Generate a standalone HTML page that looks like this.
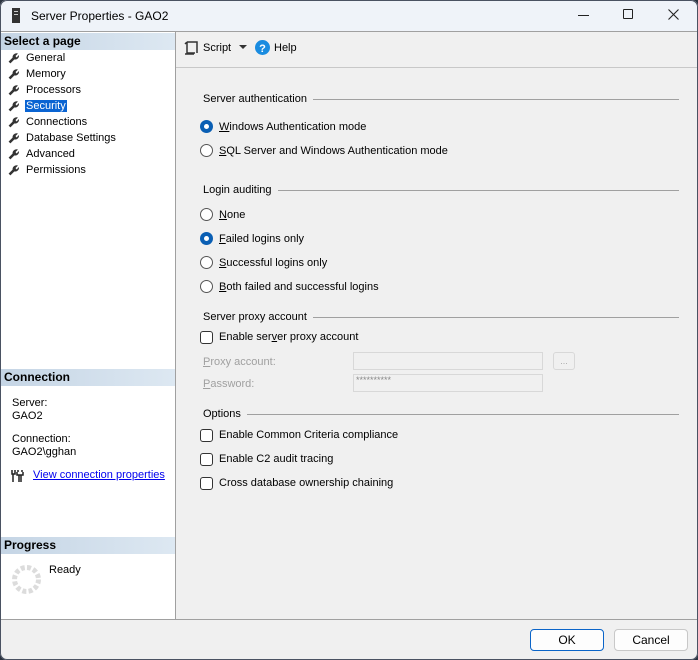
<!DOCTYPE html>
<html><head><style>
*{margin:0;padding:0;box-sizing:border-box}
body{width:698px;height:660px;overflow:hidden;background:#2b3340;font-family:"Liberation Sans",sans-serif;font-size:11px;color:#000}
.win{position:absolute;left:0;top:0;width:698px;height:660px;background:#f0f0f0;border-radius:7px;overflow:hidden}
.frame{position:absolute;left:0;top:0;width:698px;height:660px;border:1px solid #4a5262;border-radius:7px;pointer-events:none}
.title{position:absolute;left:0;top:0;width:698px;height:31px;background:#eff3f9}
.a{position:absolute;white-space:nowrap}
.left{position:absolute;left:1px;top:32px;width:175px;height:587px;background:#fff;border-right:1px solid #a0a0a0}
.hdr{position:absolute;left:0;width:174px;height:17px;background:linear-gradient(90deg,#c5d5e5,#dde8f2);font-weight:bold;font-size:12px;padding:1px 3px}
.item{position:absolute;left:7px;height:16px}
.item svg{position:absolute;left:0;top:2px}
.item span{position:absolute;left:17px;top:2px;white-space:nowrap;padding:0 1px}
.sec{position:absolute;left:203px;right:19px;height:14px}
.sec span{background:#f0f0f0;padding-right:6px;position:relative;top:1px}
.sec:before{content:"";position:absolute;left:0;right:0;top:7px;border-top:1px solid #a0a0a0}
.radio{position:absolute;left:200px;width:13px;height:13px;border-radius:50%;border:1px solid #555;background:#fff}
.radio.on{border:none;background:#0a5fb4}
.radio.on:after{content:"";position:absolute;left:4px;top:4px;width:5px;height:5px;border-radius:50%;background:#fff}
.cb{position:absolute;left:200px;width:13px;height:13px;border:1px solid #333;border-radius:3px;background:#fff}
.lbl{position:absolute;left:219px;white-space:nowrap;padding-top:1px}
u{text-decoration:underline}
.box{position:absolute;border:1px solid #d8d8d8;background:#f0f0f0}
.btn{position:absolute;top:629px;height:22px;border:1px solid #c8c8c8;border-radius:4px;background:#fdfdfd;text-align:center;line-height:20px;font-size:12px}
</style></head><body>
<div class="win">
<div class="title">
 <svg class="a" style="left:11px;top:8px" width="10" height="15"><rect x="1" y="0" width="8" height="15" fill="#333"/><rect x="3" y="3" width="4" height="1" fill="#ccc"/><rect x="3" y="6" width="4" height="1" fill="#ccc"/></svg>
 <div class="a" style="left:31px;top:9px;font-size:12px">Server Properties - GAO2</div>
 <div class="a" style="left:578px;top:15px;width:11px;border-top:1px solid #222"></div>
 <div class="a" style="left:623px;top:9px;width:10px;height:10px;border:1px solid #222;border-radius:1px"></div>
 <svg class="a" style="left:668px;top:9px" width="11" height="11"><path d="M0.5 0.5L10.5 10.5M10.5 0.5L0.5 10.5" stroke="#222" stroke-width="1.1"/></svg>
</div>
<div class="a" style="left:0;top:31px;width:698px;border-top:1px solid #a0a0a0"></div>
<div class="left">
 <div class="hdr" style="top:1px">Select a page</div>
 <div class="item" style="top:18px"><svg width="12" height="12"><path d="M1.5 10.5L6 6" stroke="#333" stroke-width="2.6"/><path d="M5 7A4 4 0 0 1 10 1.5L7.5 4L8.5 5.5L11 3A4 4 0 0 1 6.5 7.5Z" fill="#333"/></svg><span>General</span></div>
 <div class="item" style="top:34px"><svg width="12" height="12"><path d="M1.5 10.5L6 6" stroke="#333" stroke-width="2.6"/><path d="M5 7A4 4 0 0 1 10 1.5L7.5 4L8.5 5.5L11 3A4 4 0 0 1 6.5 7.5Z" fill="#333"/></svg><span>Memory</span></div>
 <div class="item" style="top:50px"><svg width="12" height="12"><path d="M1.5 10.5L6 6" stroke="#333" stroke-width="2.6"/><path d="M5 7A4 4 0 0 1 10 1.5L7.5 4L8.5 5.5L11 3A4 4 0 0 1 6.5 7.5Z" fill="#333"/></svg><span>Processors</span></div>
 <div class="item" style="top:66px"><svg width="12" height="12"><path d="M1.5 10.5L6 6" stroke="#333" stroke-width="2.6"/><path d="M5 7A4 4 0 0 1 10 1.5L7.5 4L8.5 5.5L11 3A4 4 0 0 1 6.5 7.5Z" fill="#333"/></svg><span style="background:#0a64d2;color:#fff">Security</span></div>
 <div class="item" style="top:82px"><svg width="12" height="12"><path d="M1.5 10.5L6 6" stroke="#333" stroke-width="2.6"/><path d="M5 7A4 4 0 0 1 10 1.5L7.5 4L8.5 5.5L11 3A4 4 0 0 1 6.5 7.5Z" fill="#333"/></svg><span>Connections</span></div>
 <div class="item" style="top:98px"><svg width="12" height="12"><path d="M1.5 10.5L6 6" stroke="#333" stroke-width="2.6"/><path d="M5 7A4 4 0 0 1 10 1.5L7.5 4L8.5 5.5L11 3A4 4 0 0 1 6.5 7.5Z" fill="#333"/></svg><span>Database Settings</span></div>
 <div class="item" style="top:114px"><svg width="12" height="12"><path d="M1.5 10.5L6 6" stroke="#333" stroke-width="2.6"/><path d="M5 7A4 4 0 0 1 10 1.5L7.5 4L8.5 5.5L11 3A4 4 0 0 1 6.5 7.5Z" fill="#333"/></svg><span>Advanced</span></div>
 <div class="item" style="top:130px"><svg width="12" height="12"><path d="M1.5 10.5L6 6" stroke="#333" stroke-width="2.6"/><path d="M5 7A4 4 0 0 1 10 1.5L7.5 4L8.5 5.5L11 3A4 4 0 0 1 6.5 7.5Z" fill="#333"/></svg><span>Permissions</span></div>
 <div class="hdr" style="top:337px">Connection</div>
 <div class="a" style="left:11px;top:365px">Server:</div>
 <div class="a" style="left:11px;top:378px">GAO2</div>
 <div class="a" style="left:11px;top:401px">Connection:</div>
 <div class="a" style="left:11px;top:414px">GAO2\gghan</div>
 <svg class="a" style="left:10px;top:437px" width="13" height="13"><path d="M1 1v4h3V1M2 5v8M6 3v3h6V3M7 1v2M11 1v2M8 6v7M10 6v7" stroke="#222" stroke-width="1.5" fill="none"/></svg>
 <div class="a" style="left:32px;top:437px;color:#00e;text-decoration:underline">View connection properties</div>
 <div class="hdr" style="top:505px">Progress</div>
 <svg class="a" style="left:10px;top:532px" width="31" height="31"><circle cx="15.5" cy="15.5" r="12" stroke="#dcdcdc" stroke-width="5" fill="none" stroke-dasharray="4 2.3"/></svg>
 <div class="a" style="left:48px;top:532px">Ready</div>
</div>
<div class="a" style="left:176px;top:67px;width:522px;border-top:1px solid #c8c8c8"></div>
<svg class="a" style="left:184px;top:40px" width="14" height="16"><path d="M3 2h10v11M3 2v11h8M1 14h9M3 2L1 4" stroke="#333" stroke-width="1.5" fill="none"/></svg>
<div class="a" style="left:203px;top:42px">Script</div>
<svg class="a" style="left:239px;top:45px" width="8" height="5"><path d="M0 0h8L4 4z" fill="#333"/></svg>
<svg class="a" style="left:255px;top:40px" width="15" height="15"><circle cx="7.5" cy="7.5" r="7.5" fill="#1a8ce0"/><text x="7.5" y="12" fill="#fff" font-size="11" font-weight="bold" text-anchor="middle" font-family="Liberation Sans">?</text></svg>
<div class="a" style="left:274px;top:42px">Help</div>

<div class="sec" style="top:92px"><span>Server authentication</span></div>
<div class="radio on" style="top:120px"></div><div class="lbl" style="top:120px"><u>W</u>indows Authentication mode</div>
<div class="radio" style="top:144px"></div><div class="lbl" style="top:144px"><u>S</u>QL Server and Windows Authentication mode</div>
<div class="sec" style="top:183px"><span>Login auditing</span></div>
<div class="radio" style="top:208px"></div><div class="lbl" style="top:208px"><u>N</u>one</div>
<div class="radio on" style="top:232px"></div><div class="lbl" style="top:232px"><u>F</u>ailed logins only</div>
<div class="radio" style="top:256px"></div><div class="lbl" style="top:256px"><u>S</u>uccessful logins only</div>
<div class="radio" style="top:280px"></div><div class="lbl" style="top:280px"><u>B</u>oth failed and successful logins</div>
<div class="sec" style="top:310px"><span>Server proxy account</span></div>
<div class="cb" style="top:331px"></div><div class="lbl" style="top:330px">Enable ser<u>v</u>er proxy account</div>
<div class="a" style="left:203px;top:356px;color:#a0a0a0"><u>P</u>roxy account:</div>
<div class="box" style="left:353px;top:352px;width:190px;height:18px"></div>
<div class="box" style="left:553px;top:352px;width:22px;height:18px;border-radius:3px;color:#aaa;font-size:9px;text-align:center;line-height:16px">...</div>
<div class="a" style="left:203px;top:378px;color:#a0a0a0"><u>P</u>assword:</div>
<div class="box" style="left:353px;top:374px;width:190px;height:18px;color:#888;font-size:9px;padding-left:2px">**********</div>
<div class="sec" style="top:407px"><span>Options</span></div>
<div class="cb" style="top:429px"></div><div class="lbl" style="top:428px">Enable Common Criteria compliance</div>
<div class="cb" style="top:453px"></div><div class="lbl" style="top:452px">Enable C2 audit tracing</div>
<div class="cb" style="top:477px"></div><div class="lbl" style="top:476px">Cross database ownership chaining</div>

<div class="a" style="left:0;top:619px;width:698px;border-top:1px solid #a0a0a0"></div>
<div class="btn" style="left:530px;width:74px;border:1px solid #0a64c8">OK</div>
<div class="btn" style="left:614px;width:74px">Cancel</div>
</div>
<div class="frame"></div>
</body></html>
